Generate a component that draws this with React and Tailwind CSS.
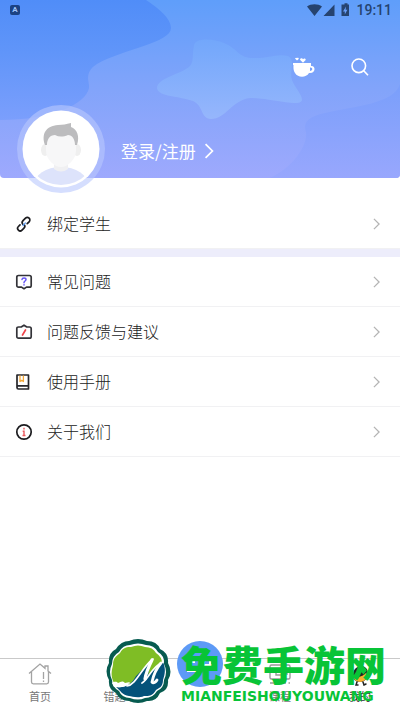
import React from "react";

const cjk = "font-['Noto_Sans_CJK_SC',sans-serif]";

function Chevron({ className }) {
  return (
    <svg viewBox="0 0 8 14" className={className} fill="none" stroke="currentColor">
      <path d="M1 1 7 7 1 13" />
    </svg>
  );
}

function LinkIcon() {
  return (
    <svg viewBox="0 0 18 18" className="h-[18px] w-[18px]" fill="none" strokeWidth="1.7" strokeLinecap="round">
      <g stroke="#1c1c1f">
        <path d="M7.8 9.2c-1-1.200-.8-2.500.2-3.500L10.500 3.200c1-1 2.600-1 3.600 0s1 2.600 0 3.600L12.200 8.700" />
        <path d="M9.200 9.800c.9 1 .8 2.300-.2 3.300L7 15.100c-1 1-2.600 1-3.600 0s-1-2.600 0-3.600L5 9.900" />
      </g>
      <path d="m8 10.500 2.400-2.600" stroke="#5b9bf2" strokeWidth="1.300" />
    </svg>
  );
}

function QuestionIcon() {
  return (
    <svg viewBox="0 0 18 18" className="h-[18px] w-[18px]" fill="none" strokeLinecap="round" strokeLinejoin="round">
      <path
        d="M3.500 2.500h11c1 0 1.700.7 1.700 1.700v8.200c0 1-.7 1.700-1.700 1.700h-3L9 15.700l-2.500-1.600h-3c-1 0-1.700-.7-1.700-1.700V4.200c0-1 .7-1.700 1.700-1.700Z"
        stroke="#333338"
        strokeWidth="1.700"
      />
      <path d="M7 6.500c.2-2.200 4-2.100 4 0 0 1.500-2 1.500-2 3.200M9 11.800v.1" stroke="#6654f5" strokeWidth="1.500" />
    </svg>
  );
}

function FeedbackIcon() {
  return (
    <svg viewBox="0 0 18 18" className="h-[18px] w-[18px]" fill="none" strokeLinecap="round" strokeLinejoin="round">
      <path
        d="M3.500 4h2.700L9 2.200 11.800 4h2.700c1 0 1.700.7 1.700 1.700v7.800c0 1-.7 1.700-1.700 1.700h-11c-1 0-1.700-.7-1.700-1.700V5.700C1.800 4.700 2.500 4 3.500 4Z"
        stroke="#333338"
        strokeWidth="1.700"
      />
      <path d="m7.500 12 3-5" stroke="#f0464c" strokeWidth="1.700" />
    </svg>
  );
}

function BookIcon() {
  return (
    <svg viewBox="0 0 18 18" className="h-[18px] w-[18px]" fill="none" strokeLinejoin="round">
      <path d="M2 2h11.500v14H3.500C2.600 16 2 15.400 2 14.600V2ZM2 12.800h11.500" stroke="#26262a" strokeWidth="1.700" />
      <path d="M5 2.500v6l1.700-1.200 1.700 1.200v-6" stroke="#f3a93a" strokeWidth="1.300" />
    </svg>
  );
}

function InfoIcon() {
  return (
    <svg viewBox="0 0 18 18" className="h-[18px] w-[18px]" fill="none">
      <circle cx="9" cy="9" r="7.200" stroke="#1c1c1f" strokeWidth="1.700" />
      <path d="M9 4.800v1.700M7.700 8.200H9v4M7.500 12.500h3" stroke="#ec5a5e" strokeWidth="1.400" />
    </svg>
  );
}

const helpRows = [
  { label: "常见问题", Icon: QuestionIcon },
  { label: "问题反馈与建议", Icon: FeedbackIcon },
  { label: "使用手册", Icon: BookIcon },
  { label: "关于我们", Icon: InfoIcon },
];

function Row({ label, Icon }) {
  return (
    <button type="button" className="flex h-[50px] w-full items-center border-b border-[#f1f1f3] pr-5 pl-[15px] text-left">
      <Icon />
      <span className="ml-[14px] flex-1 pb-0.5 text-base leading-6 font-light text-[#222]">{label}</span>
      <Chevron className="h-3 w-[7px] stroke-[1.500] text-[#b4b4b4]" />
    </button>
  );
}

function HeaderWaves() {
  return (
    <svg viewBox="0 0 400 178" preserveAspectRatio="none" className="absolute inset-0 h-full w-full">
      <defs>
        <linearGradient id="base" x1="0" y1="0" x2="0" y2="1">
          <stop offset="0" stopColor="#5f9efa" />
          <stop offset=".5" stopColor="#82a4fa" />
          <stop offset="1" stopColor="#9ea9fd" />
        </linearGradient>
        <linearGradient id="deep" gradientUnits="userSpaceOnUse" x1="0" y1="0" x2="0" y2="130">
          <stop offset="0" stopColor="#508df8" />
          <stop offset=".4" stopColor="#6095f9" />
          <stop offset="1" stopColor="#7fa0fd" />
        </linearGradient>
        <linearGradient id="right" gradientUnits="userSpaceOnUse" x1="0" y1="85" x2="0" y2="178">
          <stop offset="0" stopColor="#7a9ffb" />
          <stop offset="1" stopColor="#98a7fd" />
        </linearGradient>
        <linearGradient id="star" x1="0" y1="0" x2="0" y2="1">
          <stop offset="0" stopColor="#72a7fb" />
          <stop offset="1" stopColor="#96b6fc" />
        </linearGradient>
      </defs>
      <path d="M0 0h400v178H0Z" fill="url(#base)" />
      <path d="M0 0h146C158 8 171 18 171 28c0 15-48 21-74 36-14 9-7 18-8 24-3 16-37 32-89 32Z" fill="url(#deep)" />
      <path d="M400 84c-6 20-45 22-75 29-18 4-22 10-19 19 2 14-14 36-36 46h130Z" fill="url(#right)" />
      <path
        d="M194 46C194 38 212 38 224 43 238 49 238 57 251 58 268 59 276 53 288 56 296 60 289 72 292 80 295 88 302 94 302 100 300 108 270 98 250 98 232 100 226 119 211 119 200 118 204 106 193 101 180 96 158 97 157 88 157 78 182 74 190 66 194 62 192 54 194 46Z"
        fill="url(#star)"
      />
    </svg>
  );
}

function Avatar() {
  return (
    <svg viewBox="0 0 88 88" className="h-[88px] w-[88px]">
      <defs>
        <clipPath id="face">
          <circle cx="44" cy="44" r="36" />
        </clipPath>
      </defs>
      <circle cx="44" cy="44" r="44" fill="#b9c8fd" fillOpacity=".6" />
      <circle cx="44" cy="44" r="38.500" fill="#fff" />
      <g clipPath="url(#face)">
        <ellipse cx="44" cy="80" rx="27" ry="18" fill="#dde3fb" />
        <path d="M37 56h14v8q-7 5-14 0Z" fill="#f0f0f2" />
        <ellipse cx="28" cy="45" rx="4" ry="6" fill="#efefef" />
        <ellipse cx="60" cy="45" rx="4" ry="6" fill="#efefef" />
        <path d="M29 35c3-8 27-8 30 0v11c0 8-8 16-15 16s-15-8-15-16Z" fill="#f7f7f8" />
        <path d="M28 40c-4-11 1-19 13-20 5 0 8-1 13-2v4c6 2 9 9 6 18h-2c0-6-3-10-7-10-5 2-9 2-13 0-5 0-8 4-8 10Z" fill="#bcbcbe" />
      </g>
    </svg>
  );
}

function StatusBar() {
  return (
    <div className="relative flex h-5 items-center justify-between pr-2 pl-[10px] text-[#26436f]">
      <span className="flex h-[10px] w-[10px] items-center justify-center rounded-[2px] bg-[#1c4283] font-['Roboto',sans-serif] text-[8px] leading-none font-bold text-[#a3c4fb]">
        A
      </span>
      <div className="flex items-center">
        <svg viewBox="0 0 42 14" className="h-[14px] w-[42px]" fill="currentColor">
          <path d="M0 3.500C4 .5 11 .5 15 3.500L7.500 13ZM27.500 1.500v11.500H16.500Z" />
          <path d="M36 1.500h1.500V.3h3v1.200H42V13h-7.500V1.500Z" />
          <path d="m39 3.500-3 5h1.800v3l2.600-4.800h-1.800Z" fill="#699ef8" />
        </svg>
        <span className="ml-[7px] font-['Roboto',sans-serif] text-sm leading-5 font-medium">19:11</span>
      </div>
    </div>
  );
}

function Header() {
  return (
    <header className="relative h-[178px]">
      <div className="absolute inset-0 overflow-hidden rounded-b-[4px]">
        <HeaderWaves />
      </div>
      <StatusBar />
      <div className="relative flex h-[85px] items-center justify-end gap-9 pt-2 pr-[31px]">
        <button type="button" aria-label="礼物">
          <svg viewBox="0 0 23 24" className="h-6 w-[23px]" fill="#fff">
            <path d="M1 8h18v3c5-1 5 8-2 7-3 5-11 5-14 0-2-3-1.500-6-1.500-8H1Zm17 4.500V16c3 0 3-4 0-3.500Z" />
            <path d="M3 3.500c1-1.500 2-.5 2-.2.5-1 2-.2 1.700.6L5 5.500ZM8 4.700c.5-2 2.500-1.600 3-.4.800-1.400 3-1 2.700.7L11 7.800Z" />
          </svg>
        </button>
        <button type="button" aria-label="搜索">
          <svg viewBox="0 0 18 18" className="h-[18px] w-[18px]" fill="none" stroke="#fff" strokeWidth="1.600">
            <circle cx="7.800" cy="7.800" r="6.800" />
            <path d="m12.500 12.500 4.500 4.700" />
          </svg>
        </button>
      </div>
      <div className="relative flex items-center pl-[17px]">
        <Avatar />
        <button type="button" className="ml-4 flex items-center gap-2 pt-[3px] text-[17px] leading-6 text-white">
          登录/注册
          <Chevron className="h-4 w-[10px] stroke-[1.500]" />
        </button>
      </div>
    </header>
  );
}

function HomeIcon() {
  return (
    <svg viewBox="0 0 24 24" className="h-6 w-6" fill="none" stroke="#a3a3a3" strokeWidth="1.300">
      <path d="M1 11.500 12 2l5 4.300V4h3v5l3 2.500M3.500 9.500V20c0 1 .8 1.800 1.800 1.800h13.400c1 0 1.800-.8 1.800-1.800V9.500M15.500 10v7M15.500 18.500V20" />
    </svg>
  );
}

function MistakesIcon() {
  return (
    <svg viewBox="0 0 24 24" className="h-6 w-6" fill="none" stroke="#a3a3a3" strokeWidth="1.300">
      <path d="M3 4h18v17H3ZM7 9h10M7 14h10" />
    </svg>
  );
}

function CourseIcon() {
  return (
    <svg viewBox="0 0 24 24" className="h-6 w-6" fill="none" stroke="#999" strokeWidth="1.400">
      <rect x="2" y="3" width="20" height="14" rx="1.500" />
      <path d="M8 7h8v6H8ZM16 9l3-1v4l-3-1M2 21h16M20.500 21H22" />
    </svg>
  );
}

function MineIcon() {
  return (
    <svg viewBox="0 0 24 24" className="h-6 w-6" strokeLinecap="round">
      <path d="M10 2c2 0 3 1 3 2 4 0 7 3 7 7 1 4-3 9-8 9s-7-3-7-7c0-5 3-8 7-9-1 0-2-1-2-2Z" fill="#222" />
      <path d="M6 14c5 2 9 0 12-3 2 4-1 9-6 9-4 0-7-3-6-6Z" fill="#f8b02d" />
      <path d="m13 7 2 2-3 1M16 7l1 2" stroke="#fff" fill="none" />
      <path d="m9 20-1 3 2 0M15 20l1 3 2-1" stroke="#222" strokeWidth="1.500" fill="none" />
    </svg>
  );
}

const tabs = [
  { label: "首页", Icon: HomeIcon },
  { label: "错题本", Icon: MistakesIcon },
  null,
  { label: "课程", Icon: CourseIcon },
  { label: "我的", Icon: MineIcon, active: true },
];

function TabBar() {
  return (
    <nav className="grid h-[53px] grid-cols-5 border-t border-[#c9c9c9]">
      {tabs.map((tab) =>
        tab ? (
          <button key={tab.label} type="button" className="flex flex-col items-center pt-[3px]">
            <tab.Icon />
            <span className={`text-[11px] leading-5 ${tab.active ? "text-[#333]" : "text-[#777]"}`}>{tab.label}</span>
          </button>
        ) : (
          <button
            key="study"
            type="button"
            aria-label="学习"
            className="-mt-[18px] flex h-[46px] w-[46px] items-center justify-center justify-self-center rounded-full bg-[#5d9af6]"
          >
            <svg viewBox="0 0 26 22" className="h-[22px] w-[26px]" fill="none" stroke="#fff" strokeWidth="2">
              <path d="M0 9h8M2 14h6M0 18h10M19 3l-3 9h9M23 8v6c0 4-3 5-7 4" />
            </svg>
          </button>
        )
      )}
    </nav>
  );
}

function WatermarkLogo() {
  return (
    <svg viewBox="0 0 66 66" className="h-[66px] w-[66px]">
      <path
        d="M24 2Q33-2 42 2q10 0 13 8 9 4 8 14 5 9 0 17 1 10-8 13-4 9-13 8-9 4-18 0-9 0-13-8-8-4-7-13-5-9 0-17-1-10 7-14 5-8 13-8Z"
        fill="#075b50"
      />
      <path
        d="M25 6q8-3 16 0 8 0 12 7 7 4 6 12 4 8 0 16 0 8-7 11-4 7-12 7-7 3-15 0-8 0-11-7-7-4-7-11-4-8 0-16 0-8 7-12 4-7 11-7Z"
        fill="#fff"
      />
      <path d="M26 8q7-3 14 0 8 0 11 6 6 4 6 10L36 42 22 45 9 44C5 36 7 31 8 26c0-8 4-9 7-12 3-6 8-6 11-6Z" fill="#7fbd25" />
      <path d="M58 23c3 7 2 12 0 18 0 7-4 8-7 10-4 7-8 6-12 6-7 3-12 0-15 0-7-1-8-5-13-9 12 1 16-4 20-11L46 22l-3 14Z" fill="#04527a" />
      <path d="M7 44c3-2 5-1 6 0 3-1 4-3 7 0l5-1c-3 5-10 6-16 5Z" fill="#fff" />
      <g fill="none" stroke="#fff" strokeLinecap="round">
        <path d="M22 47c9-1 15-19 26-27" strokeWidth="1.700" />
        <path d="M47 21c-3 6-6 12-7 19" strokeWidth="3.200" />
        <path d="M37 44c6-3 10-17 21-21" strokeWidth="1.700" />
        <path d="M56 24c-5 6-8 14-9 19 1 2 4 0 5-2" strokeWidth="2.800" />
      </g>
    </svg>
  );
}

function Watermark() {
  return (
    <div className="pointer-events-none absolute right-[14px] bottom-1.5 flex items-center gap-[10px] text-[#08c437]">
      <WatermarkLogo />
      <div className="flex flex-col gap-0.5">
        <span className="text-[41px] leading-[46px] font-black">免费手游网</span>
        <span className="font-['DejaVu_Sans',sans-serif] text-sm leading-4 font-bold">MIANFEISHOUYOUWANG</span>
      </div>
    </div>
  );
}

function App() {
  return (
    <div className={`relative flex min-h-screen flex-col bg-white ${cjk}`}>
      <Header />
      <main className="flex-1 pt-[21px]">
        <Row label="绑定学生" Icon={LinkIcon} />
        <div className="h-2 bg-[#ededfb]" />
        {helpRows.map((row) => (
          <Row key={row.label} label={row.label} Icon={row.Icon} />
        ))}
      </main>
      <TabBar />
      <Watermark />
    </div>
  );
}

export default App;
